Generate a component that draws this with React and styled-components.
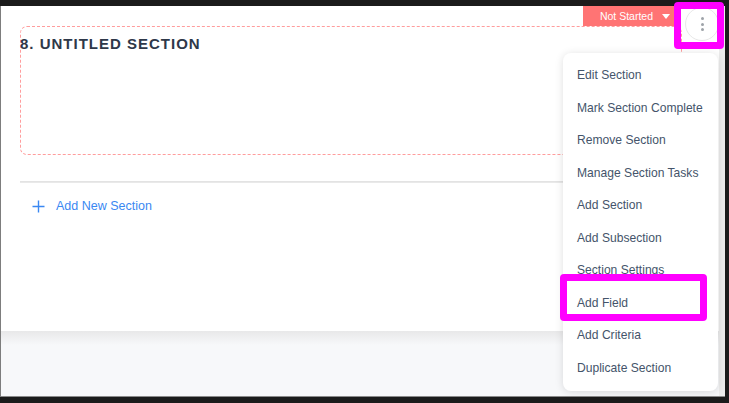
import React from "react";
import styled, { createGlobalStyle } from "styled-components";

const Global = createGlobalStyle`
  html, body { margin: 0; padding: 0; background: #1b1b1b; }
  body { font-family: "Liberation Sans", Arial, sans-serif; overflow: hidden; }
  * { box-sizing: border-box; }
`;

const Page = styled.div`
  position: relative;
  width: 729px;
  height: 403px;
  padding-top: 6px;
  background: #1b1b1b;
`;

const Window = styled.div`
  width: 725px;
  height: 391px;
  display: grid;
  grid-template-columns: 1fr 6px;
  border-left: 1px solid #7d7d7d;
  border-bottom: 1px solid #8a8a8a;
  background: #f7f8fa;
`;

const Main = styled.div`
  display: flex;
  flex-direction: column;
`;

const Strip = styled.div`
  background: #ececec;
`;

const Panel = styled.div`
  height: 325px;
  background: #ffffff;
  display: flex;
  flex-direction: column;
`;

const Footer = styled.div`
  flex: 1;
  background: linear-gradient(#e8e8e9 0px, #f7f8fa 14px);
`;

const HeaderRow = styled.div`
  display: flex;
  justify-content: flex-end;
  height: 20px;
  padding-right: 41px;
`;

const Badge = styled.div`
  display: flex;
  align-items: center;
  gap: 9px;
  height: 20px;
  padding: 0 8px 0 17px;
  background: #ff7474;
  color: #ffffff;
  font-size: 10.5px;
`;

const Caret = styled.span`
  width: 0;
  height: 0;
  border-left: 4px solid transparent;
  border-right: 4px solid transparent;
  border-top: 5px solid #ffffff;
`;

const Card = styled.div`
  margin-left: 19px;
  width: 662px;
  height: 129px;
  border: 1px dashed #ff9d9d;
  border-radius: 7px;
  padding-top: 8px;
`;

const Title = styled.h2`
  margin: 0 0 0 -1px;
  font-size: 15px;
  line-height: 18px;
  font-weight: 700;
  letter-spacing: 1px;
  color: #2e3849;
`;

const Divider = styled.div`
  margin: 26px 20px 0 19px;
  height: 2px;
  background: #e9e9e9;
  border-top: 1px solid #e3e3e3;
`;

const AddRow = styled.div`
  display: flex;
  align-items: center;
  gap: 11px;
  margin: 15px 0 0 31px;
  height: 16px;
  color: #3a88f2;
  font-size: 12.5px;
`;

const CircleButton = styled.div`
  position: absolute;
  left: 685px;
  top: 7px;
  width: 34px;
  height: 34px;
  border-radius: 50%;
  border: 1px solid #e8e8e8;
  background: #ffffff;
  display: flex;
  flex-direction: column;
  align-items: center;
  justify-content: center;
  gap: 2.5px;
`;

const Dot = styled.span`
  width: 3px;
  height: 3px;
  border-radius: 50%;
  background: #9ea3a9;
`;

const Menu = styled.ul`
  position: absolute;
  left: 563px;
  top: 53px;
  width: 155px;
  height: 338px;
  margin: 0;
  padding: 6px 0 7px;
  list-style: none;
  background: #ffffff;
  border-radius: 8px;
  box-shadow: 0 1px 8px rgba(0, 0, 0, 0.13);
`;

const Item = styled.li`
  height: 32.5px;
  display: flex;
  align-items: center;
  padding-left: 14px;
  font-size: 12.1px;
  color: #44546a;
  white-space: nowrap;
`;

const Highlight = styled.div`
  position: absolute;
  border: 7px solid #ff00ff;
  border-radius: 4px;
`;

const items = [
  "Edit Section",
  "Mark Section Complete",
  "Remove Section",
  "Manage Section Tasks",
  "Add Section",
  "Add Subsection",
  "Section Settings",
  "Add Field",
  "Add Criteria",
  "Duplicate Section",
];

export default function App() {
  return (
    <>
      <Global />
      <Page>
        <Window>
          <Main>
            <Panel>
              <HeaderRow>
                <Badge>
                  Not Started <Caret />
                </Badge>
              </HeaderRow>
              <Card>
                <Title>8. UNTITLED SECTION</Title>
              </Card>
              <Divider />
              <AddRow>
                <svg width="13" height="13" viewBox="0 0 13 13">
                  <path d="M6.5 0.5v12M0.5 6.5h12" stroke="#3a88f2" strokeWidth="1.4" fill="none" />
                </svg>
                Add New Section
              </AddRow>
            </Panel>
            <Footer />
          </Main>
          <Strip />
        </Window>
        <CircleButton>
          <Dot />
          <Dot />
          <Dot />
        </CircleButton>
        <Menu>
          {items.map((t) => (
            <Item key={t}>{t}</Item>
          ))}
        </Menu>
        <Highlight style={{ left: 674, top: 2, width: 50, height: 47 }} />
        <Highlight style={{ left: 560, top: 274, width: 147, height: 47 }} />
      </Page>
    </>
  );
}
